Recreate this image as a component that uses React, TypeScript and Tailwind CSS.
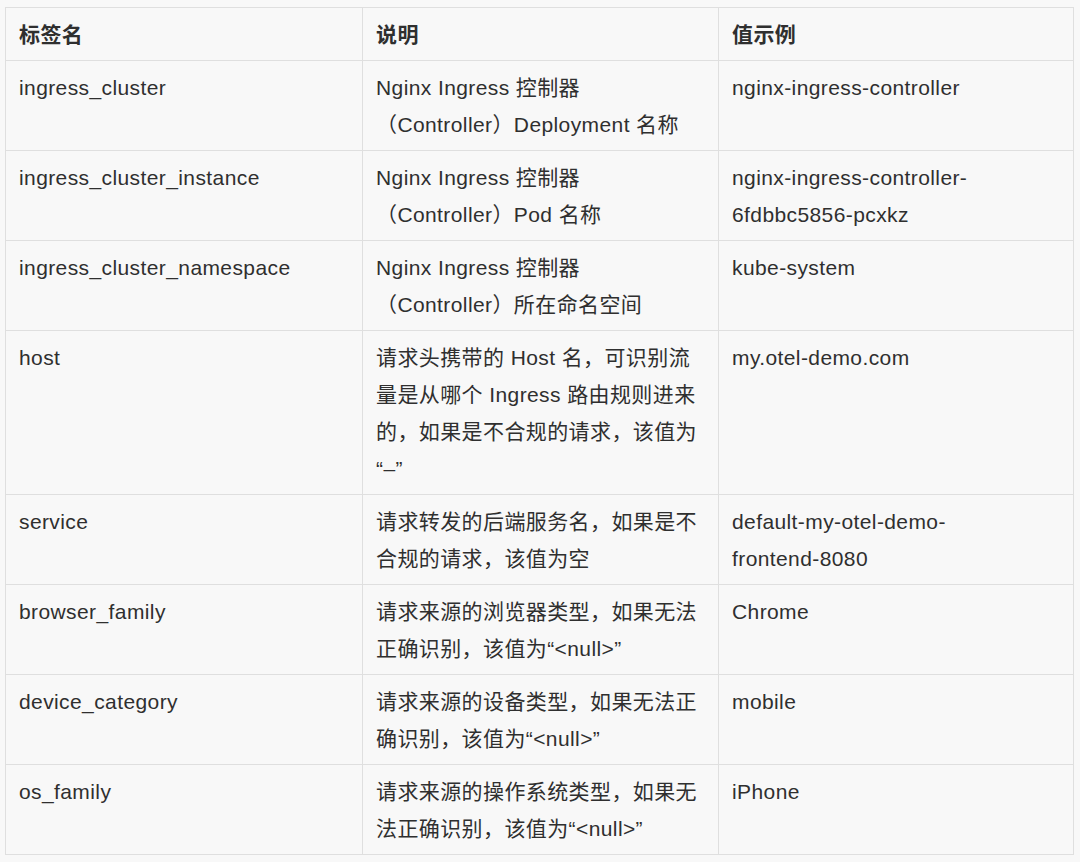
const rows: { name: string; desc: string[]; value: string[] }[] = [
  {
    name: 'ingress_cluster',
    desc: ['Nginx Ingress 控制器', '（Controller）Deployment 名称'],
    value: ['nginx-ingress-controller'],
  },
  {
    name: 'ingress_cluster_instance',
    desc: ['Nginx Ingress 控制器', '（Controller）Pod 名称'],
    value: ['nginx-ingress-controller-', '6fdbbc5856-pcxkz'],
  },
  {
    name: 'ingress_cluster_namespace',
    desc: ['Nginx Ingress 控制器', '（Controller）所在命名空间'],
    value: ['kube-system'],
  },
  {
    name: 'host',
    desc: [
      '请求头携带的 Host 名，可识别流',
      '量是从哪个 Ingress 路由规则进来',
      '的，如果是不合规的请求，该值为',
      '“–”',
    ],
    value: ['my.otel-demo.com'],
  },
  {
    name: 'service',
    desc: ['请求转发的后端服务名，如果是不', '合规的请求，该值为空'],
    value: ['default-my-otel-demo-', 'frontend-8080'],
  },
  {
    name: 'browser_family',
    desc: ['请求来源的浏览器类型，如果无法', '正确识别，该值为“<null>”'],
    value: ['Chrome'],
  },
  {
    name: 'device_category',
    desc: ['请求来源的设备类型，如果无法正', '确识别，该值为“<null>”'],
    value: ['mobile'],
  },
  {
    name: 'os_family',
    desc: ['请求来源的操作系统类型，如果无', '法正确识别，该值为“<null>”'],
    value: ['iPhone'],
  },
];

const cell =
  'border border-[#dfdfdf] px-[13px] pt-2 pb-[7px] align-top text-left';

const Lines = ({ lines }: { lines: string[] }) => (
  <>
    {lines.map((l, i) => (
      <div key={i} className="whitespace-nowrap">
        {l}
      </div>
    ))}
  </>
);

export default function App() {
  return (
    <div className="min-h-[862px] w-[1080px] bg-[#f8f8f8] pl-[5px] pt-[7px] font-['Liberation_Sans','Noto_Sans_CJK_SC',sans-serif] text-[21px] leading-[37px] tracking-[0.4px] text-[#2f2f2f]">
      <table className="w-[1068px] table-fixed border-collapse">
        <colgroup>
          <col className="w-[357px]" />
          <col className="w-[356px]" />
          <col className="w-[355px]" />
        </colgroup>
        <thead>
          <tr>
            <th className={`${cell} font-bold`}>标签名</th>
            <th className={`${cell} font-bold`}>说明</th>
            <th className={`${cell} font-bold`}>值示例</th>
          </tr>
        </thead>
        <tbody>
          {rows.map((r) => (
            <tr key={r.name}>
              <td className={cell}>{r.name}</td>
              <td className={cell}>
                <Lines lines={r.desc} />
              </td>
              <td className={cell}>
                <Lines lines={r.value} />
              </td>
            </tr>
          ))}
        </tbody>
      </table>
    </div>
  );
}
